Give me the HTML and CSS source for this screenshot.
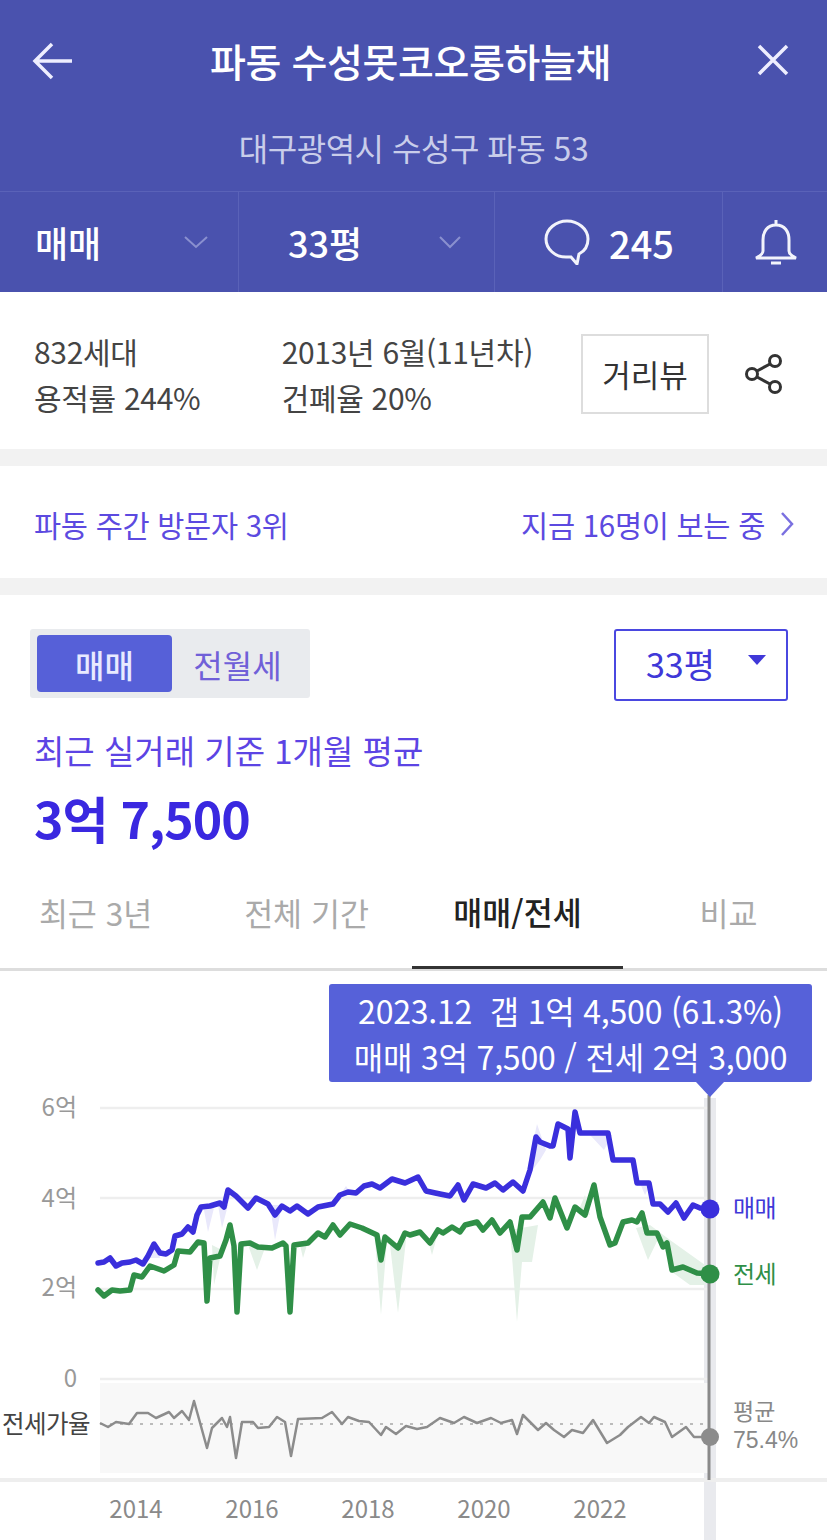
FILE: index.html
```html
<!DOCTYPE html>
<html lang="ko">
<head>
  <meta charset="UTF-8" />
  <title>파동 수성못코오롱하늘채</title>
  <link rel="stylesheet" href="styles.css">
</head>
<body>
  <header class="head">
    <div class="title-row">
      <svg class="ico-back" width="42" height="38" viewBox="0 0 42 38"><path d="M20 2 3 19l17 17M3 19h37" /></svg>
      <h1>파동 수성못코오롱하늘채</h1>
      <svg class="ico-close" width="32" height="32" viewBox="0 0 32 32"><path d="M2 2l28 28M30 2 2 30" /></svg>
    </div>
    <p class="address">대구광역시 수성구 파동 53</p>
    <div class="head-tabs">
      <div class="cell cell-type">매매
        <svg class="chev" width="24" height="14" viewBox="0 0 24 14"><path d="M1 2l11 10L23 2" /></svg>
      </div>
      <div class="cell cell-size">33평
        <svg class="chev" width="22" height="14" viewBox="0 0 22 14"><path d="M1 2l10 10L21 2" /></svg>
      </div>
      <div class="cell cell-talk">
        <svg class="ico-talk" width="48" height="46" viewBox="0 0 48 46"><path d="M24 2C13 2 3 10 3 20c0 10 9 18 20 18h5l6 7c1-4 1-6 2-10 6-3 9-9 9-15C45 10 35 2 24 2Z" /></svg>
        245
      </div>
      <div class="cell cell-bell">
        <svg class="ico-bell" width="44" height="46" viewBox="0 0 44 46"><path d="M22 1v5M22 6c-9 0-13 7-13 15v11c0 3-3 5-7 7h40c-4-2-7-4-7-7V21c0-8-4-15-13-15ZM17 44h10" /></svg>
      </div>
    </div>
  </header>

  <section class="info">
    <div class="info-col info-col-a">
      <p>832세대</p>
      <p>용적률 244%</p>
    </div>
    <div class="info-col info-col-b">
      <p>2013년 6월(11년차)</p>
      <p>건폐율 20%</p>
    </div>
    <button class="road-btn">거리뷰</button>
    <svg class="ico-share" width="38" height="40" viewBox="0 0 38 40"><circle cx="30" cy="7" r="5.5" /><circle cx="7" cy="20" r="5.5" /><circle cx="30" cy="33" r="5.5" /><path d="M12 17l13-7M12 23l13 7" /></svg>
  </section>

  <section class="rank">
    <span>파동 주간 방문자 3위</span>
    <span class="rank-now">지금 16명이 보는 중
      <svg class="ico-more" width="14" height="24" viewBox="0 0 14 24"><path d="M2 1l10 11L2 23" /></svg>
    </span>
  </section>

  <section class="price">
    <div class="controls">
      <div class="toggle">
        <span class="toggle-item on">매매</span>
        <span class="toggle-item">전월세</span>
      </div>
      <div class="select">33평<i class="caret"></i></div>
    </div>
    <p class="price-label">최근 실거래 기준 1개월 평균</p>
    <p class="price-value">3억 7,500</p>
  </section>

  <nav class="tabs">
    <a class="tab">최근 3년</a>
    <a class="tab">전체 기간</a>
    <a class="tab active">매매/전세</a>
    <a class="tab">비교</a>
  </nav>

  <section class="chart">
    <div class="tooltip">
      <div>2023.12 &nbsp;갭 1억 4,500 (61.3%)</div>
      <div>매매 3억 7,500 / 전세 2억 3,000</div>
    </div>
    <svg class="plot" width="827" height="569" viewBox="0 971 827 569">
      <rect class="cursor-band" x="704" y="1098" width="12" height="442" />
      <rect class="ratio-band" x="100" y="1383" width="609" height="90" />
      <path class="grid" d="M100 1108H710M100 1198H710M100 1289H710M100 1379H710" />
      <path class="grid-base" d="M0 1480H827" />

      <text class="y-label" x="77" y="1116">6억</text>
      <text class="y-label" x="77" y="1207">4억</text>
      <text class="y-label" x="77" y="1296">2억</text>
      <text class="y-label" x="77" y="1387">0</text>

      <!-- 개별 거래 범위 -->
      <path class="range-sale" d="M204 1210L208 1232 214 1208ZM218 1205L222 1228 228 1205ZM270 1205L275 1240 282 1205ZM150 1258L155 1240 160 1258ZM340 1195L346 1186 352 1195ZM525 1180L537 1124 546 1150 540 1160ZM590 1135L604 1150 612 1135ZM640 1183L645 1195 650 1185Z" />
      <path class="range-rent" d="M212 1245L214 1285 222 1250ZM248 1245L257 1270 266 1245ZM300 1245L303 1258 307 1245ZM375 1240L381 1315 387 1240ZM390 1245L398 1313 406 1240ZM428 1240L432 1255 436 1240ZM510 1230L517 1322 522 1262 532 1262 538 1225ZM578 1212L585 1195 590 1215ZM636 1228L648 1260 660 1235 672 1272 690 1285 705 1285 705 1265 670 1240 650 1225Z" />

      <polyline class="line-sale" points="98,1263 104,1262 110,1258 116,1266 122,1263 130,1262 136,1260 143,1264 148,1256 154,1244 160,1253 166,1254 172,1250 175,1236 182,1234 188,1227 193,1232 197,1215 201,1207 210,1206 220,1203 224,1207 228,1190 236,1196 248,1208 256,1198 268,1204 275,1215 282,1206 290,1211 297,1206 308,1214 318,1207 333,1204 340,1195 348,1192 356,1193 364,1186 372,1184 380,1188 392,1179 405,1183 418,1177 426,1191 440,1194 450,1196 458,1185 464,1200 473,1184 486,1188 495,1183 503,1190 513,1182 523,1191 530,1170 536,1137 540,1142 550,1146 553,1146 558,1124 568,1129 570,1158 575,1112 580,1133 608,1133 613,1160 633,1160 637,1183 649,1183 653,1204 660,1204 668,1212 676,1203 684,1218 693,1205 700,1208 710,1209" />
      <polyline class="line-rent" points="98,1290 104,1296 112,1290 120,1291 130,1290 134,1275 142,1277 150,1266 164,1271 174,1265 178,1251 190,1252 198,1242 204,1243 207,1301 210,1258 220,1256 226,1240 230,1225 234,1246 237,1312 241,1244 250,1243 258,1247 272,1248 283,1243 286,1246 290,1312 294,1245 308,1243 318,1233 325,1237 333,1225 340,1235 350,1224 362,1228 377,1235 381,1260 385,1237 398,1248 405,1233 410,1235 420,1232 430,1243 438,1230 443,1233 452,1227 460,1232 465,1225 477,1222 483,1230 492,1220 500,1233 510,1222 517,1250 522,1217 530,1217 543,1202 550,1218 555,1198 567,1228 575,1207 585,1215 594,1185 600,1217 610,1245 615,1243 623,1222 632,1220 637,1222 642,1213 647,1233 657,1233 663,1247 667,1243 672,1270 683,1267 697,1273 710,1274" />

      <path class="ratio-avg" d="M100 1424H709" />
      <polyline class="line-ratio" points="100,1423 108,1427 116,1422 129,1424 137,1413 148,1413 156,1418 169,1412 174,1418 182,1411 189,1420 194,1401 199,1419 207,1448 212,1428 222,1418 227,1427 230,1417 236,1458 242,1422 253,1422 258,1428 269,1427 277,1417 285,1422 291,1456 298,1419 322,1418 332,1412 342,1424 348,1417 359,1421 369,1422 381,1435 386,1427 396,1434 406,1426 417,1429 427,1427 440,1418 454,1423 464,1417 477,1423 491,1418 501,1423 512,1420 517,1434 523,1415 538,1430 546,1423 554,1430 564,1437 572,1430 583,1433 593,1420 607,1443 620,1435 628,1427 641,1417 649,1423 654,1417 665,1422 672,1437 686,1427 694,1437 709,1437" />

      <path class="cursor" d="M709 1095V1480" />
      <circle class="dot-sale" cx="710" cy="1209" r="9.5" />
      <circle class="dot-rent" cx="710" cy="1274" r="9.5" />
      <circle class="dot-ratio" cx="710" cy="1437" r="9" />

      <text class="tag-sale" x="733" y="1217">매매</text>
      <text class="tag-rent" x="733" y="1283">전세</text>
      <text class="tag-ratio" x="733" y="1420">평균</text>
      <text class="tag-ratio tag-ratio-num" x="733" y="1448">75.4%</text>
      <text class="tag-name" x="2" y="1433">전세가율</text>

      <text class="x-label" x="136" y="1518">2014</text>
      <text class="x-label" x="252" y="1518">2016</text>
      <text class="x-label" x="368" y="1518">2018</text>
      <text class="x-label" x="484" y="1518">2020</text>
      <text class="x-label" x="600" y="1518">2022</text>
    </svg>
  </section>
</body>
</html>
```
FILE: styles.css
```css
* {
  box-sizing: border-box;
}
html, body {
  margin: 0;
  overflow: hidden;
}
body {
  width: 827px;
  height: 1540px;
  background: #fff;
  color: #444;
  font-family: "Noto Sans CJK KR", "Noto Sans", sans-serif;
}
p, h1 {
  margin: 0;
}

/* header */
.head {
  height: 292px;
  background: #4a52ae;
  color: #fff;
}
.title-row {
  height: 124px;
  display: flex;
  align-items: center;
  justify-content: space-between;
  padding: 0 38px 0 32px;
}
.title-row h1 {
  margin: 0 10px 4px 0;
  font-size: 39px;
  font-weight: 500;
  letter-spacing: -0.4px;
}
.ico-back path, .ico-close path {
  fill: none;
  stroke: #eef;
  stroke-width: 3.5;
}
.ico-back {
  margin-bottom: 2px;
}
.ico-close {
  margin-bottom: 4px;
}
.address {
  height: 67px;
  line-height: 46px;
  text-align: center;
  font-size: 32px;
  color: #c9cdea;
  letter-spacing: -0.5px;
}
.head-tabs {
  height: 101px;
  display: grid;
  grid-template-columns: 239px 256px 228px 104px;
  border-top: 1px solid #5a62b8;
}
.cell {
  display: flex;
  align-items: center;
  font-size: 36px;
  font-weight: 500;
  border-right: 1px solid #5a62b8;
}
.cell-type {
  padding: 0 30px 0 35px;
  justify-content: space-between;
}
.cell-size {
  padding: 0 33px 0 49px;
  justify-content: space-between;
}
.cell-talk {
  padding-left: 48px;
  gap: 18px;
  font-size: 38px;
}
.cell-bell {
  border-right: 0;
  padding-left: 31px;
}
.chev path {
  fill: none;
  stroke: #8a90cf;
  stroke-width: 2;
}
.ico-talk path, .ico-bell path {
  fill: none;
  stroke: #f2f3fb;
  stroke-width: 3;
}

/* info */
.info {
  height: 157px;
  display: flex;
  align-items: center;
  padding: 7px 44px 0 34px;
  font-size: 30px;
  line-height: 46px;
  letter-spacing: -0.3px;
}
.info-col-a {
  width: 248px;
}
.info-col-b {
  width: 300px;
}
.road-btn {
  width: 128px;
  height: 80px;
  margin-right: 36px;
  background: #fff;
  border: 2px solid #ddd;
  color: #333;
  font: inherit;
  font-size: 31px;
}
.ico-share {
  flex: none;
}
.ico-share circle, .ico-share path {
  fill: none;
  stroke: #333;
  stroke-width: 3;
}

/* rank */
.rank {
  height: 146px;
  margin: 0;
  padding: 19px 33px 15px 34px;
  display: flex;
  align-items: center;
  justify-content: space-between;
  border-top: 17px solid #f2f2f2;
  border-bottom: 17px solid #f2f2f2;
  font-size: 29.5px;
  color: #5c4ae0;
  letter-spacing: -0.3px;
}
.rank-now {
  display: flex;
  align-items: center;
  gap: 15px;
}
.ico-more path {
  fill: none;
  stroke: #7a70e0;
  stroke-width: 2.5;
}

/* price */
.price {
  height: 274px;
  padding: 34px 39px 0 34px;
}
.controls {
  display: flex;
  justify-content: space-between;
  align-items: flex-start;
}
.toggle {
  width: 280px;
  height: 69px;
  margin-left: -4px;
  padding: 6px 7px;
  display: flex;
  background: #e9ebee;
  border-radius: 3px;
}
.toggle-item {
  flex: 1;
  display: flex;
  align-items: center;
  justify-content: center;
  font-size: 32px;
  color: #7060d8;
}
.toggle-item.on {
  flex: none;
  width: 135px;
  background: #5660d8;
  border-radius: 4px;
  color: #e8eaff;
  font-weight: 500;
}
.select {
  position: relative;
  width: 174px;
  height: 72px;
  padding-left: 30px;
  line-height: 66px;
  border: 2px solid #4a48e0;
  border-radius: 3px;
  color: #4038d8;
  font-size: 34px;
}
.caret {
  position: absolute;
  right: 20px;
  top: 24px;
  border-left: 9px solid transparent;
  border-right: 9px solid transparent;
  border-top: 10px solid #4038d8;
}
.price-label {
  margin-top: 24px;
  font-size: 33px;
  line-height: 50px;
  color: #5c44e4;
}
.price-value {
  margin-top: 7px;
  font-size: 50px;
  line-height: 70px;
  font-weight: 700;
  color: #3a28e0;
  letter-spacing: -1px;
}

/* tabs */
.tabs {
  height: 102px;
  margin-left: -10px;
  width: 837px;
  display: grid;
  grid-template-columns: repeat(4, 211px);
  border-bottom: 3px solid #ddd;
  overflow: visible;
}
.tab {
  display: flex;
  align-items: center;
  justify-content: center;
  padding-bottom: 13px;
  font-size: 31.5px;
  color: #aaa;
}
.tab.active {
  color: #222;
  font-weight: 500;
  border-bottom: 3px solid #333;
  margin-bottom: -1px;
}

/* chart */
.chart {
  position: relative;
  height: 569px;
}
.plot {
  display: block;
  font-family: "Noto Sans CJK KR", "Noto Sans", sans-serif;
}
.tooltip {
  position: absolute;
  left: 329px;
  top: 13px;
  width: 483px;
  height: 98px;
  padding-top: 3px;
  background: #5661d9;
  border-radius: 3px;
  color: #fff;
  font-size: 32px;
  line-height: 46px;
  text-align: center;
  white-space: nowrap;
  letter-spacing: -0.2px;
}
.tooltip::after {
  content: "";
  position: absolute;
  left: 367px;
  top: 98px;
  border-left: 14px solid transparent;
  border-right: 14px solid transparent;
  border-top: 15px solid #5661d9;
}
.cursor-band {
  fill: #e9eaee;
}
.ratio-band {
  fill: #f8f8f8;
}
.grid {
  fill: none;
  stroke: #eee;
  stroke-width: 2.5;
}
.grid-base {
  fill: none;
  stroke: #eee;
  stroke-width: 4;
}
.y-label {
  font-size: 24px;
  fill: #999;
  text-anchor: end;
}
.x-label {
  font-size: 24px;
  fill: #8a8a8a;
  text-anchor: middle;
}
.range-sale {
  fill: #e9e8fb;
}
.range-rent {
  fill: #e4f1e7;
}
.line-sale, .line-rent {
  fill: none;
  stroke-width: 5.5;
  stroke-linejoin: round;
  stroke-linecap: round;
  filter: blur(0.6px);
}
.line-sale {
  stroke: #3a2fdc;
}
.line-rent {
  stroke: #2f8f47;
}
.line-ratio {
  fill: none;
  stroke: #8c8c8c;
  stroke-width: 2.5;
  stroke-linejoin: round;
}
.ratio-avg {
  fill: none;
  stroke: #bbb;
  stroke-width: 2;
  stroke-dasharray: 3 7;
}
.cursor {
  fill: none;
  stroke: #8a8a8a;
  stroke-width: 3;
}
.dot-sale {
  fill: #3a2fdc;
}
.dot-rent {
  fill: #2f8f47;
}
.dot-ratio {
  fill: #8c8c8c;
}
.tag-sale, .tag-rent {
  font-size: 24px;
  letter-spacing: -0.5px;
}
.tag-sale {
  fill: #4038d8;
}
.tag-rent {
  fill: #2f8f47;
}
.tag-ratio {
  font-size: 23px;
  fill: #888;
}
.tag-ratio-num {
  font-family: "Liberation Sans", sans-serif;
}
.tag-name {
  font-size: 24.5px;
  letter-spacing: -0.5px;
  fill: #444;
}
```
